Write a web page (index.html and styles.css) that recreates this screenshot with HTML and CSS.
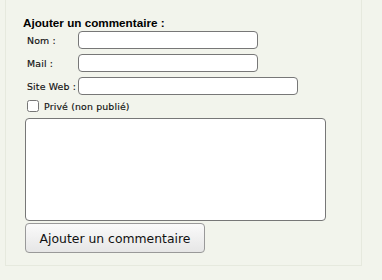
FILE: index.html
```html
<!DOCTYPE html>
<html lang="fr">
<head>
    <meta charset="UTF-8">
    <title>Commentaire</title>
    <link rel="stylesheet" href="styles.css">
</head>
<body>
    <div class="panel">
        <form class="comment-form">
            <h3 class="form-title">Ajouter un commentaire :</h3>
            <div class="field">
                <label class="field-label">Nom :</label>
                <input type="text" class="field-input">
            </div>
            <div class="field">
                <label class="field-label">Mail :</label>
                <input type="text" class="field-input">
            </div>
            <div class="field">
                <label class="field-label">Site Web :</label>
                <input type="text" class="field-input wide">
            </div>
            <div class="private">
                <input type="checkbox" class="private-box">
                <label class="private-label">Privé (non publié)</label>
            </div>
            <textarea class="comment-text"></textarea>
            <button type="button" class="submit-button">Ajouter un commentaire</button>
        </form>
    </div>
</body>
</html>
```

FILE: styles.css
```css
body {
    margin: 0;
    background-color: #f2f4ec;
    font-family: 'DejaVu Sans', sans-serif;
    color: #111;
}

.panel {
    margin-left: 5px;
    width: 355px;
    height: 265px;
    border: 1px solid #e6e9de;
    border-top: none;
}

.comment-form {
    padding: 16px 0 0 19px;
}

.form-title {
    margin: 0 0 2px -2px;
    font-family: 'Liberation Sans', sans-serif;
    font-size: 11.7px;
    font-weight: bold;
    color: #000;
}

.field {
    display: flex;
    align-items: center;
    margin-bottom: 5px;
}

.field-label {
    width: 51px;
    padding-left: 2px;
    font-size: 9.4px;
    color: #111;
    letter-spacing: 0.15px;
    white-space: nowrap;
    -webkit-text-stroke: 0.15px #111;
}

.field-input {
    width: 176px;
    height: 14px;
    margin: 0;
    padding: 1px;
    border: 1px solid #777;
    border-radius: 4px;
    background: #fff;
}

.field-input.wide {
    width: 216px;
}

.private {
    display: flex;
    align-items: center;
}

.private-box {
    width: 12px;
    height: 12px;
    margin: 0 5px 0 2px;
}

.private-label {
    font-size: 9.4px;
    color: #111;
    letter-spacing: 0.15px;
    white-space: nowrap;
    -webkit-text-stroke: 0.15px #111;
}

.comment-text {
    display: block;
    width: 297px;
    height: 99px;
    margin: 6px 0 0 0;
    padding: 1px;
    border: 1px solid #777;
    border-radius: 4px;
    background: #fff;
    resize: none;
}

.submit-button {
    display: block;
    width: 180px;
    height: 30px;
    margin-top: 2px;
    padding: 0;
    border: 1px solid #999;
    border-radius: 4px;
    background: linear-gradient(#fafafa, #e6e6e6);
    font-family: 'DejaVu Sans', sans-serif;
    font-size: 12.4px;
    color: #111;
}
```
